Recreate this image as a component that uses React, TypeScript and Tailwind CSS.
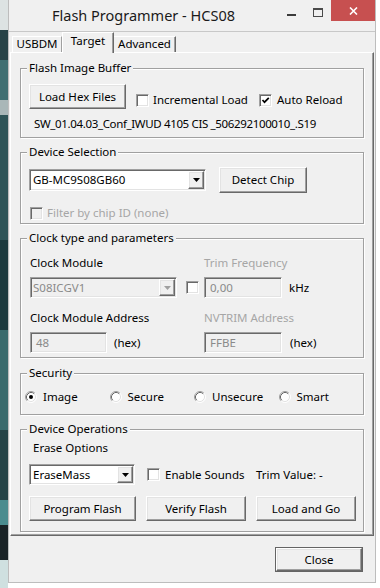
import React from 'react';

const raised =
  'border border-t-white border-l-white border-r-[#696969] border-b-[#696969] shadow-[inset_-1px_-1px_0_#a0a0a0,inset_1px_1px_0_#e3e3e3]';
const sunken =
  'border border-t-[#a0a0a0] border-l-[#a0a0a0] border-r-white border-b-white shadow-[inset_1px_1px_0_#696969,inset_-1px_-1px_0_#e3e3e3]';

const Btn: React.FC<{ label: string; className: string }> = ({ label, className }) => (
  <div className={`${raised} ${className} bg-[#f0f0f0] flex items-center justify-center text-black shrink-0`}>
    {label}
  </div>
);

const Check: React.FC<{ checked?: boolean; disabled?: boolean }> = ({ checked, disabled }) => (
  <span
    className={`${sunken} w-[13px] h-[13px] shrink-0 flex items-center justify-center ${
      disabled ? 'bg-[#f0f0f0]' : 'bg-white'
    }`}
  >
    {checked && (
      <svg width="9" height="9" viewBox="0 0 9 9">
        <path d="M1.5 4 L3.5 6.2 L7.8 1.8" stroke="#000" strokeWidth="1.7" fill="none" />
      </svg>
    )}
  </span>
);

const Radio: React.FC<{ checked?: boolean }> = ({ checked }) => (
  <svg width="12" height="12" viewBox="0 0 12 12" className="shrink-0">
    <circle cx="6" cy="6" r="5" fill="#fff" />
    <path d="M2.11 9.89 A5.5 5.5 0 0 1 9.89 2.11" stroke="#a0a0a0" fill="none" />
    <path d="M9.89 2.11 A5.5 5.5 0 0 1 2.11 9.89" stroke="#fff" fill="none" />
    <path d="M2.82 9.18 A4.5 4.5 0 0 1 9.18 2.82" stroke="#696969" fill="none" />
    <path d="M9.18 2.82 A4.5 4.5 0 0 1 2.82 9.18" stroke="#e3e3e3" fill="none" />
    {checked && <circle cx="6" cy="6" r="2" fill="#000" />}
  </svg>
);

const Combo: React.FC<{ value: string; className: string; disabled?: boolean }> = ({
  value,
  className,
  disabled,
}) => (
  <div
    className={`${sunken} ${className} ${
      disabled ? 'bg-[#f0f0f0] text-[#8a8a8a]' : 'bg-white text-black'
    } flex items-stretch p-[1px] shrink-0`}
  >
    <span className={`flex-1 flex items-center ${disabled ? 'pl-[1px]' : 'pl-[2px]'}`}>{value}</span>
    <span className={`${raised} bg-[#f0f0f0] w-[16px] flex items-center justify-center`}>
      <svg width="7" height="4" viewBox="0 0 7 4">
        <path d="M0 0H7L3.5 4Z" fill={disabled ? '#a0a0a0' : '#000'} />
      </svg>
    </span>
  </div>
);

const TextBox: React.FC<{ value: string; className: string }> = ({ value, className }) => (
  <div className={`${sunken} ${className} h-[21px] bg-[#f0f0f0] text-[#8a8a8a] flex items-center pl-[5px] shrink-0`}>
    {value}
  </div>
);

const Group: React.FC<{ title: string; className: string; children: React.ReactNode }> = ({
  title,
  className,
  children,
}) => (
  <div className={`relative shrink-0 border border-[#a0a0a0] shadow-[1px_1px_0_#fff,inset_1px_1px_0_#fff] ${className}`}>
    <span className="absolute -top-[8px] left-[6px] px-[2px] bg-[#f0f0f0] leading-[14px]">{title}</span>
    {children}
  </div>
);

const gray = 'text-[#a6a6a6]';

export default function App() {
  return (
    <div className="w-[380px] h-[588px] flex bg-white overflow-hidden font-['Noto_Sans',sans-serif] text-[11.5px] text-black">
      {/* desktop behind the window */}
      <div className="w-[8px] h-full flex flex-col shrink-0">
        <div className="h-[30px] bg-[#dde3e3]" />
        <div className="h-[30px] bg-[#284347]" />
        <div className="h-[40px] bg-[#3f6f72]" />
        <div className="h-[15px] bg-[#a9b7b8]" />
        <div className="h-[125px] bg-[#2e5457]" />
        <div className="h-[90px] bg-[#1d3a3e]" />
        <div className="h-[100px] bg-[#3a6a6c]" />
        <div className="h-[70px] bg-[#244246]" />
        <div className="h-[25px] bg-[#4b8c8f]" />
        <div className="h-[35px] bg-[#1a2326]" />
        <div className="flex-1 bg-[#cfe0e0]" />
      </div>

      <div className="w-[368px] h-[583px] shrink-0 flex flex-col bg-[#f0f0f0] border-x border-b border-[#bdbdbd]">
        {/* title bar */}
        <div className="h-[31px] flex shrink-0">
          <div className="w-[269px] text-center text-[14.5px] leading-[31px] text-[#1a1a1a]">
            Flash Programmer - HCS08
          </div>
          <div className="w-[26px] flex justify-center pt-[14px]">
            <div className="w-[9px] h-[2px] bg-[#3b3b3b]" />
          </div>
          <div className="w-[27px] flex justify-center pt-[8px]">
            <div className="w-[10px] h-[9px] border border-t-2 border-[#4a4a4a]" />
          </div>
          <div className="w-[44px] h-[21px] bg-[#c75050] flex items-center justify-center">
            <svg width="9" height="8" viewBox="0 0 9 8">
              <path d="M1 0.5 L8 7.5 M8 0.5 L1 7.5" stroke="#fff" strokeWidth="1.6" />
            </svg>
          </div>
        </div>

        {/* client area */}
        <div className="flex-1 border-t border-[#c8c8c8] px-[1px] flex flex-col">
          {/* tabs */}
          <div className="h-[20px] flex items-end pl-[2px] shrink-0">
            <div className="w-[50px] h-[16px] border-t border-l border-r border-t-white border-l-white border-r-[#a0a0a0] flex justify-center leading-[14px]">
              USBDM
            </div>
            <div className="relative z-10 -mb-px w-[52px] h-[21px] bg-[#f0f0f0] border-t border-l border-r border-t-white border-l-white border-r-[#696969] shadow-[inset_-1px_0_0_#a0a0a0] flex justify-center leading-[14px] pt-[1px]">
              Target
            </div>
            <div className="w-[62px] h-[16px] border-t border-r border-t-white border-r-[#696969] shadow-[inset_-1px_0_0_#a0a0a0] flex justify-center leading-[14px]">
              Advanced
            </div>
          </div>

          {/* tab panel */}
          <div className="h-[484px] shrink-0 border border-t-white border-l-white border-r-[#696969] border-b-[#696969] shadow-[inset_-1px_-1px_0_#a0a0a0] px-[9px] pt-[15px] flex flex-col">
            <Group title="Flash Image Buffer" className="h-[70px]">
              <div className="ml-[8px] mt-[15px] h-[25px] flex items-center">
                <Btn label="Load Hex Files" className="w-[97px] h-[25px]" />
                <label className="ml-[10px] mt-[7px] w-[123px] flex items-center gap-[4px]">
                  <Check />
                  <span>Incremental Load</span>
                </label>
                <label className="mt-[7px] flex items-center gap-[5px]">
                  <Check checked />
                  <span>Auto Reload</span>
                </label>
              </div>
              <div className="ml-[13px] mt-[8px] leading-[14px] tracking-[-0.35px]">
                SW_01.04.03_Conf_IWUD 4105 CIS _506292100010_.S19
              </div>
            </Group>

            <Group title="Device Selection" className="h-[72px] mt-[14px]">
              <div className="ml-[8px] mt-[14px] h-[26px] flex items-center">
                <Combo value="GB-MC9S08GB60" className="w-[177px] h-[22px]" />
                <Btn label="Detect Chip" className="ml-[13px] w-[88px] h-[26px]" />
              </div>
              <label className="ml-[9px] mt-[13px] h-[14px] flex items-center gap-[4px]">
                <Check disabled />
                <span className={gray}>Filter by chip ID (none)</span>
              </label>
            </Group>

            <Group title="Clock type and parameters" className="h-[120px] mt-[14px]">
              <div className="ml-[9px] mt-[17px] leading-[14px] flex">
                <span className="w-[174px]">Clock Module</span>
                <span className={gray}>Trim Frequency</span>
              </div>
              <div className="ml-[9px] mt-[7px] h-[21px] flex items-center">
                <Combo value="S08ICGV1" className="w-[147px] h-[21px]" disabled />
                <span className="ml-[9px]">
                  <Check />
                </span>
                <TextBox value="0,00" className="ml-[5px] w-[78px]" />
                <span className="ml-[7px]">kHz</span>
              </div>
              <div className="ml-[9px] mt-[13px] leading-[14px] flex">
                <span className="w-[174px]">Clock Module Address</span>
                <span className={gray}>NVTRIM Address</span>
              </div>
              <div className="ml-[9px] mt-[7px] h-[21px] flex items-center">
                <TextBox value="48" className="w-[77px]" />
                <span className="ml-[7px] w-[90px]">(hex)</span>
                <TextBox value="FFBE" className="w-[78px]" />
                <span className="ml-[8px]">(hex)</span>
              </div>
            </Group>

            <Group title="Security" className="h-[42px] mt-[15px]">
              <div className="ml-[4px] mt-[16px] h-[14px] flex">
                {['Image', 'Secure', 'Unsecure', 'Smart'].map((s, i) => (
                  <label key={s} className="w-[85px] flex items-center gap-[6px]">
                    <Radio checked={i === 0} />
                    <span>{s}</span>
                  </label>
                ))}
              </div>
            </Group>

            <Group title="Device Operations" className="h-[103px] mt-[14px]">
              <div className="ml-[12px] mt-[11px] leading-[14px]">Erase Options</div>
              <div className="ml-[8px] mt-[9px] h-[21px] flex items-center">
                <Combo value="EraseMass" className="w-[106px] h-[21px]" />
                <label className="ml-[12px] w-[109px] flex items-center gap-[5px]">
                  <Check />
                  <span>Enable Sounds</span>
                </label>
                <span>Trim Value: -</span>
              </div>
              <div className="ml-[8px] mt-[11px] flex gap-[10px]">
                <Btn label="Program Flash" className="w-[107px] h-[25px]" />
                <Btn label="Verify Flash" className="w-[100px] h-[25px]" />
                <Btn label="Load and Go" className="w-[100px] h-[25px]" />
              </div>
            </Group>
          </div>

          {/* dialog buttons */}
          <div className="mt-[11px] pr-[11px] flex justify-end shrink-0">
            <div className="w-[88px] h-[25px] border border-[#646464] flex">
              <Btn label="Close" className="flex-1 h-[23px]" />
            </div>
          </div>
        </div>
      </div>
    </div>
  );
}
